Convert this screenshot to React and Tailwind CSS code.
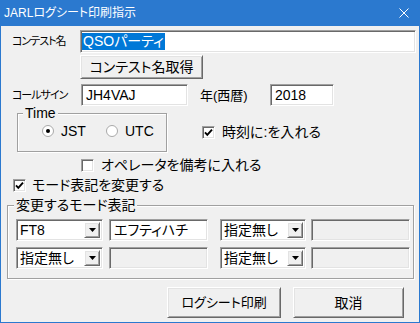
import React from 'react'

const font = "font-['Liberation_Sans','Noto_Sans_CJK_JP',sans-serif] [font-feature-settings:'palt']"
const sunken = 'border border-t-[#a0a0a0] border-l-[#a0a0a0] border-b-white border-r-white shadow-[inset_1px_1px_0_#696969,inset_-1px_-1px_0_#e3e3e3]'
const raised = 'border border-t-white border-l-white border-b-[#696969] border-r-[#696969] shadow-[inset_1px_1px_0_#e3e3e3,inset_-1px_-1px_0_#a0a0a0]'
const etched = 'border border-[#a0a0a0] shadow-[1px_1px_0_#ffffff,inset_1px_1px_0_#ffffff]'

const CheckBox = ({ checked, label, gap }) => (
  <div className={`h-[14px] flex items-center ${gap}`}>
    <span className={`w-[13px] h-[13px] bg-white shrink-0 flex items-center justify-center ${sunken}`}>
      {checked && (
        <svg width="9" height="9" viewBox="0 0 9 9">
          <polyline points="1,4.3 3.3,6.8 8,1.6" fill="none" stroke="#000" strokeWidth="1.9" />
        </svg>
      )}
    </span>
    <span className="text-[14px] leading-none whitespace-nowrap">{label}</span>
  </div>
)

const Radio = ({ checked, label }) => (
  <div className="flex items-center gap-[7px]">
    <svg width="12" height="12" viewBox="0 0 12 12" className="shrink-0">
      <circle cx="6" cy="6" r="5.5" fill="#fff" stroke="#a8a8a8" />
      {checked && <circle cx="6" cy="6" r="2" fill="#000" />}
    </svg>
    <span className="text-[14px] leading-none">{label}</span>
  </div>
)

const Combo = ({ value, w }) => (
  <div className={`${w} h-[22px] bg-white flex items-stretch p-[2px] ${sunken}`}>
    <span className="flex-1 pl-[1px] text-[14px] leading-none flex items-center whitespace-nowrap">{value}</span>
    <span className={`w-[16px] bg-[#f0f0f0] flex items-center justify-center ${raised}`}>
      <svg width="7" height="4" viewBox="0 0 7 4">
        <polygon points="0,0 7,0 3.5,4" fill="#000" />
      </svg>
    </span>
  </div>
)

const Field = ({ value, w, disabled }) => (
  <div className={`${w} h-[22px] flex items-center pl-[4px] text-[14px] leading-none ${disabled ? 'bg-[#f0f0f0]' : 'bg-white'} ${sunken}`}>
    {value}
  </div>
)

const ModeRow = ({ m1, t1, m2, t2, className }) => (
  <div className={`flex pl-[8px] ${className}`}>
    <Combo value={m1} w="w-[87px]" />
    <div className="ml-[6px]">
      <Field value={t1} w="w-[99px]" disabled={!t1} />
    </div>
    <div className="ml-[12px]">
      <Combo value={m2} w="w-[86px]" />
    </div>
    <div className="ml-[5px]">
      <Field value={t2} w="w-[99px]" disabled={!t2} />
    </div>
  </div>
)

export default function App() {
  return (
    <div className={`w-[420px] h-[323px] bg-[#2b79cf] flex flex-col text-black ${font}`}>
      <div className="h-[26px] shrink-0 flex items-center justify-between pl-[4px] pr-[11px] text-white">
        <span className="text-[12px] leading-none">JARLログシート印刷指示</span>
        <svg width="10" height="10" viewBox="0 0 10 10">
          <path d="M0.5 0.5 L9.5 9.5 M9.5 0.5 L0.5 9.5" stroke="#fff" strokeWidth="1" />
        </svg>
      </div>

      <div className="flex-1 mx-[1px] mb-[1px] bg-[#f0f0f0] flex flex-col">
        <div className="mt-[4px] h-[23px] flex items-center pl-[11px]">
          <span className="w-[68px] text-[11px] tracking-[-1px] leading-none whitespace-nowrap">コンテスト名</span>
          <div className={`w-[336px] h-[23px] bg-white flex items-center pl-[1px] ${sunken}`}>
            <span className="bg-[#0078d7] text-white text-[14px] leading-[17px] px-[1px]">QSOパーティ</span>
          </div>
        </div>

        <button className={`mt-[2px] ml-[79px] w-[123px] h-[24px] bg-[#f0f0f0] text-[14px] leading-none ${raised}`}>
          コンテスト名取得
        </button>

        <div className="mt-[5px] h-[22px] flex items-center pl-[11px]">
          <span className="w-[69px] text-[11px] tracking-[-1px] leading-none whitespace-nowrap">コールサイン</span>
          <Field value="JH4VAJ" w="w-[107px]" />
          <span className="ml-[12px] w-[70px] text-[13px] leading-none whitespace-nowrap">年(西暦)</span>
          <Field value="2018" w="w-[64px]" />
        </div>

        <div className="mt-[7px] flex items-start">
          <div className={`ml-[16px] w-[150px] h-[39px] flex flex-col ${etched}`}>
            <span className="-mt-[8px] ml-[5px] px-[2px] w-fit bg-[#f0f0f0] text-[14px] leading-[14px]">Time</span>
            <div className="mt-[4px] h-[14px] flex items-center pl-[24px]">
              <div className="w-[64px]">
                <Radio checked label="JST" />
              </div>
              <Radio label="UTC" />
            </div>
          </div>
          <div className="mt-[12px] ml-[35px]">
            <CheckBox checked label="時刻に:を入れる" gap="gap-[7px]" />
          </div>
        </div>

        <div className="mt-[6px] ml-[80px]">
          <CheckBox label="オペレータを備考に入れる" gap="gap-[7px]" />
        </div>

        <div className="mt-[6px] ml-[12px]">
          <CheckBox checked label="モード表記を変更する" gap="gap-[6px]" />
        </div>

        <div className={`mt-[13px] ml-[6px] w-[407px] h-[74px] flex flex-col ${etched}`}>
          <span className="-mt-[8px] ml-[6px] px-[2px] w-fit bg-[#f0f0f0] text-[14px] leading-[14px]">変更するモード表記</span>
          <ModeRow m1="FT8" t1="エフティハチ" m2="指定無し" t2="" className="mt-[7px]" />
          <ModeRow m1="指定無し" t1="" m2="指定無し" t2="" className="mt-[6px]" />
        </div>

        <div className="mt-[8px] flex">
          <button className={`ml-[166px] w-[114px] h-[31px] bg-[#f0f0f0] text-[13px] leading-none ${raised}`}>
            ログシート印刷
          </button>
          <button className={`ml-[12px] w-[111px] h-[31px] bg-[#f0f0f0] text-[14px] leading-none ${raised}`}>
            取消
          </button>
        </div>
      </div>
    </div>
  )
}
